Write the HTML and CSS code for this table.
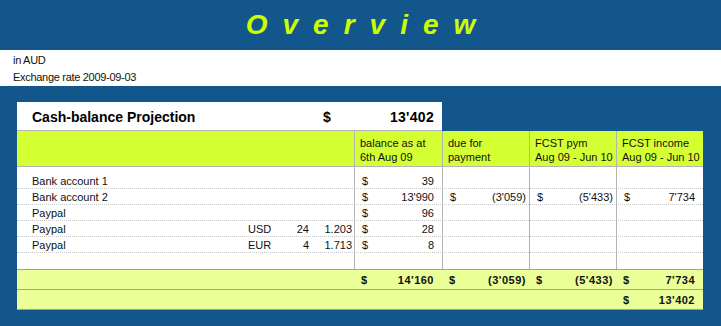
FILE: index.html
```html
<!DOCTYPE html>
<html>
<head>
<meta charset="utf-8">
<link rel="stylesheet" href="styles.css">
</head>
<body>
<header class="banner"><h1 class="banner-title">Overview</h1></header>
<section class="info">
  <div>in AUD</div>
  <div>Exchange rate 2009-09-03</div>
</section>
<main class="sheet">
  <div class="title-box">
    <span class="title-text">Cash-balance Projection</span>
    <span class="title-cur">$</span>
    <span class="title-val">13'402</span>
  </div>
  <div class="grid head">
    <div class="c-span4"></div>
    <div class="c-val hcell">balance as at<br>6th Aug 09</div>
    <div class="c-val hcell">due for<br>payment</div>
    <div class="c-val hcell">FCST pym<br>Aug 09 - Jun 10</div>
    <div class="c-val hcell">FCST income<br>Aug 09 - Jun 10</div>
  </div>
  <div class="body">
    <div class="grid spacer"><div class="c-span4"></div><div class="c-val"></div><div class="c-val"></div><div class="c-val"></div><div class="c-val"></div></div>
    <div class="grid row">
      <div class="c-label">Bank account 1</div><div></div><div></div><div></div>
      <div class="c-val money"><span>$</span><span>39</span></div>
      <div class="c-val"></div><div class="c-val"></div><div class="c-val"></div>
    </div>
    <div class="grid row">
      <div class="c-label">Bank account 2</div><div></div><div></div><div></div>
      <div class="c-val money"><span>$</span><span>13'990</span></div>
      <div class="c-val money"><span>$</span><span class="neg">(3'059)</span></div>
      <div class="c-val money"><span>$</span><span class="neg">(5'433)</span></div>
      <div class="c-val money"><span>$</span><span>7'734</span></div>
    </div>
    <div class="grid row">
      <div class="c-label">Paypal</div><div></div><div></div><div></div>
      <div class="c-val money"><span>$</span><span>96</span></div>
      <div class="c-val"></div><div class="c-val"></div><div class="c-val"></div>
    </div>
    <div class="grid row">
      <div class="c-label">Paypal</div><div class="c-cur">USD</div><div class="c-num">24</div><div class="c-rate">1.203</div>
      <div class="c-val money"><span>$</span><span>28</span></div>
      <div class="c-val"></div><div class="c-val"></div><div class="c-val"></div>
    </div>
    <div class="grid row">
      <div class="c-label">Paypal</div><div class="c-cur">EUR</div><div class="c-num">4</div><div class="c-rate">1.713</div>
      <div class="c-val money"><span>$</span><span>8</span></div>
      <div class="c-val"></div><div class="c-val"></div><div class="c-val"></div>
    </div>
    <div class="grid row blank"><div class="c-span4"></div><div class="c-val"></div><div class="c-val"></div><div class="c-val"></div><div class="c-val"></div></div>
  </div>
  <div class="grid total">
    <div class="c-span4"></div>
    <div class="money tcell"><span>$</span><span>14'160</span></div>
    <div class="money tcell"><span>$</span><span class="neg">(3'059)</span></div>
    <div class="money tcell"><span>$</span><span class="neg">(5'433)</span></div>
    <div class="money tcell"><span>$</span><span>7'734</span></div>
  </div>
  <div class="grid total last">
    <div class="c-span4"></div>
    <div></div><div></div><div></div>
    <div class="money tcell"><span>$</span><span>13'402</span></div>
  </div>
</main>
</body>
</html>
```
FILE: styles.css
```css
html, body {
  margin: 0;
  padding: 0;
}
body {
  background: #13568c;
  font-family: "Liberation Sans", Arial, sans-serif;
  color: #111;
  width: 721px;
  height: 326px;
  overflow: hidden;
}
.banner {
  height: 50px;
  display: flex;
  justify-content: center;
  align-items: center;
}
.banner-title {
  margin: 0;
  font-size: 28px;
  line-height: 50px;
  font-weight: bold;
  font-style: italic;
  color: #ccff00;
  letter-spacing: 15px;
  padding-left: 15px;
}
.info {
  background: #fff;
  height: 36px;
  box-sizing: border-box;
  padding: 2px 0 0 13px;
  font-size: 11px;
  line-height: 17px;
  letter-spacing: -0.3px;
}
.sheet {
  margin: 16px 0 0 17px;
  width: 686px;
}
.title-box {
  width: 425px;
  height: 29px;
  box-sizing: border-box;
  background: #fff;
  border-bottom: 1px solid #b4b4b4;
  display: flex;
  align-items: center;
  font-size: 14px;
  font-weight: bold;
  color: #000;
  padding: 1px 8px 0 15px;
}
.title-text {
  width: 291px;
}
.title-cur {
  flex: 1;
}
.title-val {
  letter-spacing: 0.3px;
}
.grid {
  display: grid;
  grid-template-columns: 223px 42px 30px 42px 88px 87px 87px 87px;
  font-size: 11px;
}
.c-span4 {
  grid-column: span 4;
}
.c-val {
  border-left: 1px solid #b4b4b4;
  box-sizing: border-box;
}
.head {
  background: #d4ff33;
  height: 36px;
  border-bottom: 1px solid #b4b4b4;
  box-sizing: border-box;
}
.hcell {
  padding: 5px 0 0 5px;
  line-height: 14px;
  white-space: nowrap;
  font-size: 11px;
}
.body {
  background: #fff;
}
.spacer {
  height: 6px;
}
.row {
  height: 16px;
  line-height: 16px;
  border-bottom: 1px dotted #c8c8c8;
  box-sizing: border-box;
}
.row.blank {
  border-bottom: none;
}
.c-label {
  padding-left: 15px;
}
.c-cur {
  padding-left: 8px;
}
.c-num {
  text-align: right;
  padding-right: 3px;
}
.c-rate {
  text-align: right;
  padding-right: 2px;
}
.money {
  display: flex;
  justify-content: space-between;
  padding: 0 8px 0 7px;
}
.neg {
  margin-right: -5px;
}
.total {
  background: #ebff99;
  height: 20px;
  border-top: 1px solid #a0a0a0;
  box-sizing: border-box;
  font-weight: bold;
  line-height: 19px;
  letter-spacing: 0.5px;
}
.total.last {
  border-bottom: 1px solid #a0a0a0;
  height: 21px;
}
.tcell {
  padding-top: 1px;
}
```
